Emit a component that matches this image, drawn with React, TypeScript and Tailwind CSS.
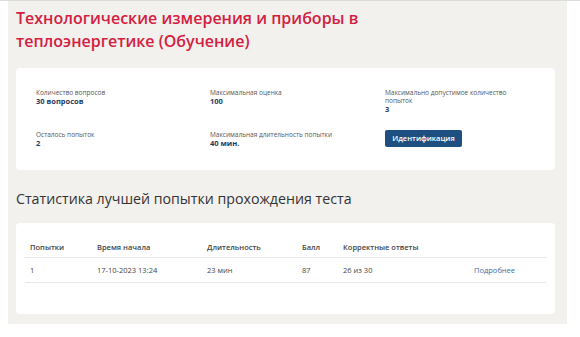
import React from "react"

const font = { fontFamily: '"Open Sans", "Noto Sans", sans-serif' }

function Info({ label, value, narrow }: { label: string; value: string; narrow?: boolean }) {
  return (
    <div className={narrow ? "w-[125px]" : ""}>
      <div className="text-[6.5px] leading-[8px] text-[#555]">{label}</div>
      <div className="text-[7.5px] leading-[9px] font-bold text-[#1e3a5f]">{value}</div>
    </div>
  )
}

const cols = "grid grid-cols-[67px_110px_95px_41px_131px_1fr]"

export default function App() {
  const headers = ["Попытки", "Время начала", "Длительность", "Балл", "Корректные ответы", ""]
  const row = ["1", "17-10-2023 13:24", "23 мин", "87", "26 из 30"]

  return (
    <div className="w-[580px] h-[337px] bg-white border-t border-[#dcdcdc]" style={font}>
      <div className="ml-2 w-[559px] bg-[#f2f1ee] px-2 pt-[6px] pb-[10px]">
        {/* Title */}
        <h1 className="text-[16px] leading-[23px] font-semibold text-[#d3203f]">
          Технологические измерения и приборы в<br />
          теплоэнергетике (Обучение)
        </h1>

        {/* Test info */}
        <div className="mt-[15px] w-[539px] bg-white rounded-sm px-5 pt-[21px] pb-[22px]">
          <div className="grid grid-cols-[174px_175px_1fr] gap-y-[16px]">
            <Info label="Количество вопросов" value="30 вопросов" />
            <Info label="Максимальная оценка" value="100" />
            <Info label="Максимально допустимое количество попыток" value="3" narrow />
            <div className="pt-[1px]">
              <Info label="Осталось попыток" value="2" />
            </div>
            <div className="pt-[1px]">
              <Info label="Максимальная длительность попытки" value="40 мин." />
            </div>
            <div>
              <button className="block w-[77px] h-[17px] rounded-[2px] bg-[#1d4f80] text-white text-[7.5px] font-semibold leading-none">
                Идентификация
              </button>
            </div>
          </div>
        </div>

        {/* Stats */}
        <h2 className="mt-[19px] text-[14.2px] leading-[20px] text-[#333]">
          Статистика лучшей попытки прохождения теста
        </h2>

        <div className="mt-[14px] w-[539px] bg-white rounded-sm px-[9px] pt-[12px] pb-[31px]">
          <div className={`${cols} border-b border-[#e6e6e6]`}>
            {headers.map((h, i) => (
              <div key={i} className="pl-[5px] pt-[7px] pb-[4px] text-[7.5px] leading-[11px] font-semibold text-[#444]">
                {h}
              </div>
            ))}
          </div>
          <div className={`${cols} border-b border-[#e6e6e6]`}>
            {row.map((c, i) => (
              <div key={i} className="pl-[5px] pt-[7px] pb-[6px] text-[7.5px] leading-[11px] text-[#444]">
                {c}
              </div>
            ))}
            <div className="pl-[5px] pt-[7px] pb-[6px] text-[7.5px] leading-[11px] text-[#3b6ea5]">Подробнее</div>
          </div>
        </div>
      </div>
    </div>
  )
}
